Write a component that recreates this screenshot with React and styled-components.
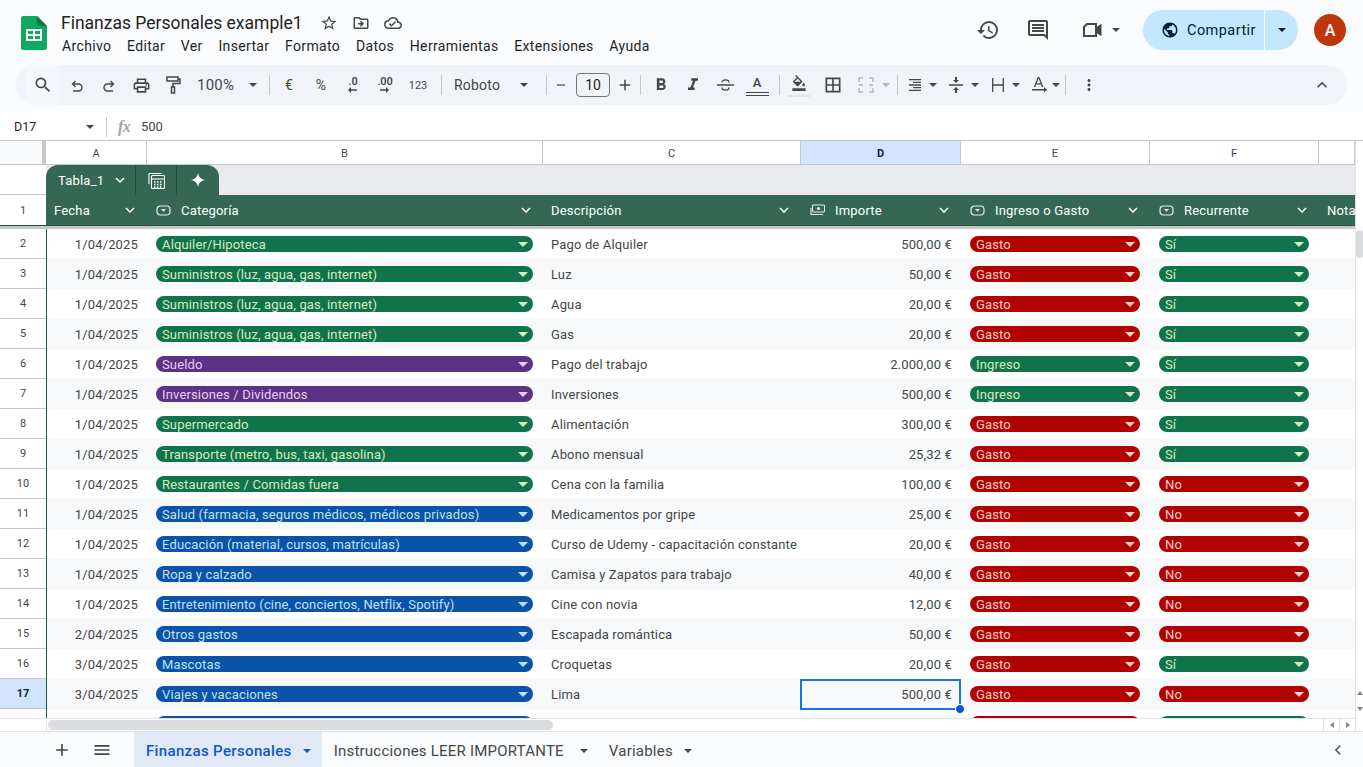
import React from "react";
import styled, { createGlobalStyle } from "styled-components";
import {
  MdSearch, MdOutlinePrint, MdFormatBold, MdFormatItalic,
  MdFormatColorFill, MdBorderAll, MdFormatAlignRight, MdMoreVert, MdExpandLess,
  MdHistory, MdOutlineComment, MdPublic, MdStarBorder, MdOutlineDriveFileMove,
  MdOutlineCloudDone, MdAdd, MdRemove, MdMenu, MdChevronLeft, MdExpandMore,
} from "react-icons/md";

const GlobalStyle = createGlobalStyle`
  html, body { margin: 0; padding: 0; background: #f9fbfd; }
  body { font-family: Roboto, "Liberation Sans", sans-serif; color: #444746; overflow: hidden; }
  * { box-sizing: border-box; }
`;

const COLS = "46px 101px 396px 258px 160px 189px 169px 36px";

const Page = styled.div`
  width: 1363px; height: 767px; display: flex; flex-direction: column; overflow: hidden; background: #f9fbfd;
`;
const TopBar = styled.header`
  height: 65px; display: flex; align-items: flex-start; justify-content: space-between; flex: none;
`;
const LeftHead = styled.div`display: flex; align-items: flex-start; padding: 16px 0 0 21px;`;
const Titles = styled.div`margin-left: 14px; margin-top: -4px;`;
const TitleLine = styled.div`display: flex; align-items: center; height: 22px;`;
const DocTitle = styled.div`font-size: 17.5px; color: #1f1f1f; width: 252px; white-space: nowrap;`;
const TitleIcon = styled.span`width: 32px; display: flex; justify-content: center; color: #444746; font-size: 18px;`;
const Menu = styled.nav`display: flex; gap: 15.7px; margin-top: 4px; margin-left: 1px; font-size: 14px; letter-spacing: 0.35px; color: #1f1f1f;`;
const RightHead = styled.div`display: flex; align-items: center; height: 60px; padding-right: 17px;`;
const HeadIcon = styled.span`display: flex; width: 24px; font-size: 24px; color: #444746; margin-left: ${p => p.$ml}px;`;
const Caret = styled.span`
  flex: none; width: 0; height: 0; display: inline-block;
  border-left: ${p => p.$s || 4}px solid transparent; border-right: ${p => p.$s || 4}px solid transparent;
  border-top: ${p => p.$s || 4}px solid ${p => p.$c || "#444746"};
  margin-left: ${p => p.$ml || 0}px;
`;
const Share = styled.div`
  margin-left: 23px; width: 155px; height: 40px; border-radius: 20px; background: #c2e7ff; display: flex; align-items: center; color: #001d35;
`;
const ShareMain = styled.div`
  width: 122px; height: 40px; padding-left: 18px; display: flex; align-items: center; gap: 8px; font-size: 14.5px; font-weight: 400; letter-spacing: 0.45px;
  border-right: 1px solid #f9fbfd; svg { font-size: 18px; }
`;
const ShareSide = styled.div`flex: 1; display: flex; justify-content: center;`;
const Avatar = styled.div`
  margin-left: 16px; width: 32px; height: 32px; border-radius: 50%; background: #bf360c; color: #fff; font-size: 16px; font-weight: 500;
  display: flex; align-items: center; justify-content: center;
`;

const Toolbar = styled.div`
  flex: none; height: 40px; margin: 0 16px; width: 1331px; border-radius: 20px; background: #f0f4f9; display: flex; align-items: center; padding-left: 10px; color: #444746;
`;
const Tool = styled.span`
  flex: none; width: ${p => p.$w || 32}px; margin-left: ${p => p.$ml || 0}px; height: ${p => p.$h || 28}px; display: flex; align-items: center; justify-content: center; font-size: ${p => p.$fs || 18}px; color: ${p => p.$c || "#444746"};
  background: ${p => p.$bg || "transparent"};
`;
const ToolLabel = styled.span`
  flex: none; width: ${p => p.$w}px; padding-left: ${p => p.$pl || 0}px; display: flex; align-items: center; justify-content: space-between; padding-right: ${p => p.$pr || 0}px; font-size: ${p => p.$fs || 14}px; height: 28px; letter-spacing: 0.2px;
`;
const Sep = styled.span`flex: none; width: 1px; height: 20px; background: #c7c7c7; margin: 0 ${p => p.$r ?? 6}px 0 ${p => p.$l ?? 6}px;`;
const SizeBox = styled.span`flex: none; width: 34px; height: 24px; border: 1px solid #747775; border-radius: 4px; font-size: 14px; display: flex; align-items: center; justify-content: center; color: #1f1f1f;`;
const DecWrap = styled.span`display: flex; flex-direction: column; align-items: center; font-size: 11px; font-weight: 600; line-height: 10px; letter-spacing: -0.2px;`;
const Collapse = styled.span`margin-left: auto; margin-right: 15px; font-size: 20px; display: flex; color: #444746;`;
const TextColor = styled.span`display: flex; flex-direction: column; align-items: center; font-size: 13px; line-height: 14px; width: 23px; border-bottom: 4px double #444746; padding-bottom: 2px; font-weight: 500; margin-top: 1px;`;
const FillWrap = styled.span`display: flex; flex-direction: column; align-items: center; border-bottom: 2px solid #e3e3e3; height: 23px; font-size: 16px; width: 22px; padding-top: 1px;`;

const FormulaBar = styled.div`
  flex: none; margin-top: 7px; height: 29px; background: #fff; display: flex; align-items: center; font-size: 13px; border-bottom: 1px solid #c7c7c7; color: #1f1f1f; padding-top: 1px;
`;
const CellName = styled.div`width: 106px; padding: 0 12px 0 14px; display: flex; justify-content: space-between; align-items: center; font-size: 12.5px;`;
const VLine = styled.span`width: 1px; height: 20px; background: #c7c7c7;`;
const Fx = styled.span`margin-left: 11px; width: 23px; font-family: "Liberation Serif", serif; font-style: italic; font-weight: 700; font-size: 16px; color: #a0a4a8; letter-spacing: -0.5px;`;
const FxValue = styled.span`color: #444746;`;

const Body = styled.div`flex: none; height: 590px; display: flex; background: #fff;`;
const Sheet = styled.div`width: 1355px; display: flex; flex-direction: column; overflow: hidden;`;
const GridLine = styled.div`display: grid; grid-template-columns: ${COLS};`;
const ColHead = styled(GridLine)`height: 24px; border-bottom: 1px solid #c7c7c7; flex: none;`;
const Corner = styled.div`background: #f8f9fa; border-right: 4px solid #c7c7c7;`;
const ColLetter = styled.div`
  display: flex; align-items: center; justify-content: center; padding-top: 1px; font-size: 11px; color: ${p => p.$on ? "#041e49" : "#444746"}; font-weight: ${p => p.$on ? 700 : 400};
  background: ${p => p.$on ? "#d3e3fd" : "#fff"}; border-right: 1px solid #c7c7c7;
`;
const TabRow = styled.div`height: 30px; display: flex; flex: none;`;
const RowStub = styled.div`width: 46px; background: #fff; border-bottom: 1px solid #c7c7c7;`;
const TabArea = styled.div`flex: 1; background: #e8eaed; display: flex; align-items: flex-end;`;
const TableTab = styled.div`height: 30px; width: 173px; background: #356854; border-radius: 12px 12px 0 0; display: flex; color: #fff;`;
const TabPart = styled.div`
  width: ${p => p.$w}px; padding-left: ${p => p.$pl || 0}px; display: flex; align-items: center; justify-content: ${p => p.$pl ? "flex-start" : "center"}; gap: 7px; font-size: 13px; font-weight: 400; letter-spacing: 0.2px; border-right: ${p => p.$last ? "none" : "1px solid #244c3c"};
  svg { flex: none; }
`;
const HeaderRow = styled(GridLine)`height: 31px; flex: none; border-bottom: 1px solid #244c3c; background: #356854;`;
const HeaderNum = styled.div`background: #fff; color: #444746; font-size: 11px; display: flex; align-items: center; justify-content: center;`;
const HeadCell = styled.div`
  color: #fff; font-size: 13px; font-weight: 400; display: flex; align-items: center; padding: 0 8px 0 ${p => p.$pl ?? 8}px; overflow: hidden; white-space: nowrap; letter-spacing: 0.2px;
`;
const HeadName = styled.span`flex: 1; margin-left: ${p => p.$ml || 0}px;`;
const Freeze = styled.div`height: 3px; background: #c7c7c7; flex: none;`;
const Rows = styled.div`flex: none; height: 489px; overflow: hidden;`;
const Row = styled(GridLine)`height: 30px; background: ${p => p.$alt ? "#f6f8f9" : "#fff"};`;
const RowNum = styled.div`
  display: flex; align-items: center; justify-content: center; font-size: 11px; height: 30px; background: ${p => p.$on ? "#d3e3fd" : "#fff"}; color: ${p => p.$on ? "#041e49" : "#444746"}; font-weight: ${p => p.$on ? 700 : 400};
  border-bottom: 1px solid #c7c7c7; box-shadow: 1px 0 0 #1d5c43; width: 46px;
`;
const Cell = styled.div`
  font-size: 13px; color: #444746; display: flex; align-items: center; padding: 0 9px 0 8px; position: relative; white-space: nowrap; overflow: visible; letter-spacing: 0.15px;
  justify-content: ${p => p.$right ? "flex-end" : "flex-start"};
`;
const ChipCell = styled.div`display: flex; align-items: center; padding: 0 ${p => p.$pr}px 0 9px;`;
const Chip = styled.div`
  width: 100%; height: 16px; border-radius: 8px; background: ${p => p.$bg}; color: ${p => p.$fg}; font-size: 13px; display: flex; align-items: center; justify-content: space-between; padding: 0 5px 0 6px; letter-spacing: 0.15px; white-space: nowrap; overflow: hidden;
`;
const Selection = styled.div`position: absolute; inset: 0 0 -1px -1px; border: 2px solid #1a73e8; pointer-events: none;`;
const Handle = styled.div`position: absolute; right: -6px; bottom: -6px; width: 10px; height: 10px; border-radius: 50%; background: #0b57d0; border: 1px solid #fff; z-index: 2;`;

const HScroll = styled.div`height: 13px; flex: none; display: flex; align-items: center; border-top: 1px solid #e1e3e1; background: #fff;`;
const HStub = styled.div`width: 47px; height: 12px; border-right: 1px solid #e1e3e1; margin-right: 1px; flex: none;`;
const Thumb = styled.div`width: 505px; height: 10px; border-radius: 5px; background: #dadce0;`;
const ArrowPair = styled.div`margin-left: auto; display: flex; margin-right: 0; height: 12px;`;
const ArrowBtn = styled.span`width: 16px; display: flex; align-items: center; justify-content: center; border-left: 1px solid #e1e3e1;`;
const TriH = styled.span`width: 0; height: 0; border-top: 3px solid transparent; border-bottom: 3px solid transparent; ${p => p.$left ? "border-right: 4px solid #80868b;" : "border-left: 4px solid #80868b;"}`;
const VScroll = styled.div`width: 8px; display: flex; flex-direction: column; border-left: 1px solid #e1e3e1; background: #fff; padding-top: 89px;`;
const VThumb = styled.div`width: 7px; height: 28px; border-radius: 4px; background: #dadce0;`;
const VArrows = styled.div`margin-top: auto; margin-bottom: 20px; display: flex; flex-direction: column; gap: 12px; align-items: center;`;
const TriV = styled.span`width: 0; height: 0; border-left: 3px solid transparent; border-right: 3px solid transparent; ${p => p.$up ? "border-bottom: 4px solid #80868b;" : "border-top: 4px solid #80868b;"}`;

const SheetBar = styled.footer`flex: none; height: 36px; border-top: 1px solid #e1e3e1; background: #f9fbfd; display: flex; align-items: center; padding-left: 50px;`;
const BarIcon = styled.span`display: flex; width: 24px; font-size: 20px; color: #444746; margin-right: ${p => p.$mr}px; justify-content: center;`;
const SheetTab = styled.div`
  height: 35px; padding: 3px ${p => p.$pr}px 0 12px; display: flex; align-items: center; gap: ${p => p.$gap}px; font-size: 15px; font-weight: ${p => p.$active ? 500 : 400}; letter-spacing: ${p => p.$active ? 0.35 : 0.22}px; white-space: nowrap;
  background: ${p => p.$active ? "#e1e9f7" : "transparent"}; color: ${p => p.$active ? "#0b57d0" : "#444746"};
`;
const EndIcon = styled.span`margin-left: auto; margin-right: 15px; display: flex; font-size: 20px; color: #5f6368;`;

const G = ["#11734b", "#d4edbc"], R = ["#b10202", "#ffcfc9"], B = ["#0a53a8", "#bfe1f6"], P = ["#5a3286", "#e6cff2"];
const data = [
  ["1/04/2025", "Alquiler/Hipoteca", G, "Pago de Alquiler", "500,00 €", "Gasto", "Sí"],
  ["1/04/2025", "Suministros (luz, agua, gas, internet)", G, "Luz", "50,00 €", "Gasto", "Sí"],
  ["1/04/2025", "Suministros (luz, agua, gas, internet)", G, "Agua", "20,00 €", "Gasto", "Sí"],
  ["1/04/2025", "Suministros (luz, agua, gas, internet)", G, "Gas", "20,00 €", "Gasto", "Sí"],
  ["1/04/2025", "Sueldo", P, "Pago del trabajo", "2.000,00 €", "Ingreso", "Sí"],
  ["1/04/2025", "Inversiones / Dividendos", P, "Inversiones", "500,00 €", "Ingreso", "Sí"],
  ["1/04/2025", "Supermercado", G, "Alimentación", "300,00 €", "Gasto", "Sí"],
  ["1/04/2025", "Transporte (metro, bus, taxi, gasolina)", G, "Abono mensual", "25,32 €", "Gasto", "Sí"],
  ["1/04/2025", "Restaurantes / Comidas fuera", G, "Cena con la familia", "100,00 €", "Gasto", "No"],
  ["1/04/2025", "Salud (farmacia, seguros médicos, médicos privados)", B, "Medicamentos por gripe", "25,00 €", "Gasto", "No"],
  ["1/04/2025", "Educación (material, cursos, matrículas)", B, "Curso de Udemy - capacitación constante", "20,00 €", "Gasto", "No"],
  ["1/04/2025", "Ropa y calzado", B, "Camisa y Zapatos para trabajo", "40,00 €", "Gasto", "No"],
  ["1/04/2025", "Entretenimiento (cine, conciertos, Netflix, Spotify)", B, "Cine con novia", "12,00 €", "Gasto", "No"],
  ["2/04/2025", "Otros gastos", B, "Escapada romántica", "50,00 €", "Gasto", "No"],
  ["3/04/2025", "Mascotas", B, "Croquetas", "20,00 €", "Gasto", "Sí"],
  ["3/04/2025", "Viajes y vacaciones", B, "Lima", "500,00 €", "Gasto", "No"],
];

const ChipValue = ({ c, children }) => (
  <Chip $bg={c[0]} $fg={c[1]}>
    <span>{children}</span>
    <Caret $s={5} $c={c[1]} />
  </Chip>
);

const SheetsLogo = () => (
  <svg width="26" height="34" viewBox="0 0 26 34">
    <path d="M2.500 0H16l10 10v21.500a2.500 2.500 0 0 1-2.500 2.500h-21A2.500 2.500 0 0 1 0 31.500v-29A2.500 2.500 0 0 1 2.500 0z" fill="#0ea960" />
    <path d="M16 0l10 10h-7.500A2.500 2.500 0 0 1 16 7.500z" fill="#0b7a41" />
    <path d="M5 13h16v12H5zM7 15v3h5v-3zm7 0v3h5v-3zM7 20v3h5v-3zm7 0v3h5v-3z" fill="#fff" fillRule="evenodd" />
  </svg>
);
const DropIcon = () => (
  <svg width="15" height="11" viewBox="0 0 15 11" fill="none" stroke="#e8eaed" strokeWidth="1.200">
    <rect x="1" y="1" width="13" height="9" rx="3.500" />
    <path d="M5 4h5L7.500 6.800z" fill="#e8eaed" stroke="none" />
  </svg>
);
const MoneyIcon = () => (
  <svg width="15" height="12" viewBox="0 0 15 12" fill="none" stroke="#e8eaed" strokeWidth="1.100">
    <rect x="2.500" y="1" width="12" height="7" rx="1" />
    <circle cx="8.500" cy="4.500" r="1.600" fill="#e8eaed" stroke="none" />
    <path d="M1 4v6.500h12" />
  </svg>
);
const CalcIcon = () => (
  <svg width="17" height="17" viewBox="0 0 17 17" fill="none" stroke="#fff" strokeWidth="1.100">
    <path d="M1 12V1.500h12.500" />
    <rect x="3.500" y="3.500" width="13" height="13" rx="1" />
    <path d="M3.500 7h13" />
    <path d="M6 10h1.500M9 10h1.500M12 10h1.500M6 12.500h1.500M9 12.500h1.500M12 12.500h1.500M6 15h1.500M9 15h1.500M12 15h1.500" strokeWidth="1.400" />
  </svg>
);
const SparkIcon = () => (
  <svg width="14" height="14" viewBox="0 0 14 14"><path d="M7 0c.6 4 2.900 6.400 7 7-4.100.6-6.400 3-7 7-.6-4-2.900-6.400-7-7 4.100-.6 6.400-3 7-7z" fill="#fff" /></svg>
);
const ArrowMini = ({ left }) => (
  <svg width="9" height="6" viewBox="0 0 9 6"><path d={left ? "M9 2.300H3V0L0 3l3 3V3.700h6z" : "M0 2.300h6V0l3 3-3 3V3.700H0z"} fill="#444746" /></svg>
);
const Undo = () => (
  <svg width="14" height="14" viewBox="0 0 14 14" fill="none" stroke="#444746" strokeWidth="1.400" style={{ marginTop: 3 }}>
    <path d="M5.500 1L2.500 4l3 3M2.500 4h6a3.500 3.500 0 0 1 0 7H3" />
  </svg>
);
const Redo = () => (
  <svg width="14" height="14" viewBox="0 0 14 14" fill="none" stroke="#444746" strokeWidth="1.400" style={{ marginTop: 3 }}>
    <path d="M8.500 1l3 3-3 3M11.500 4h-6a3.500 3.500 0 0 0 0 7H11" />
  </svg>
);
const Roller = () => (
  <svg width="15" height="18" viewBox="0 0 15 18" fill="none" stroke="#444746" strokeWidth="1.500">
    <rect x="1" y="1" width="11" height="4" />
    <path d="M12 3h2v4.500H7V11" />
    <rect x="5.500" y="11" width="3" height="6" />
  </svg>
);
const Strike = () => (
  <svg width="17" height="14" viewBox="0 0 17 14" fill="none" stroke="#444746" strokeWidth="1.300">
    <path d="M0 7h17M5 4.500C5 1 12 1 12 4.500M5 9.500c0 3.500 7 3.500 7 0" />
  </svg>
);
const Merge = () => (
  <svg width="16" height="18" viewBox="0 0 16 18" fill="none" stroke="#b4b8bc" strokeWidth="1.500">
    <path d="M5 2H1v4M11 2h4v4M5 16H1v-4M11 16h4v-4M1 9h4M15 9h-4" />
  </svg>
);
const VAlign = () => (
  <svg width="14" height="18" viewBox="0 0 14 18" fill="#444746"><path d="M0 8.300h14v1.400H0zM7 7L4 4h2V1h2v3h2zM7 11l3 3H8v3H6v-3H4z" /></svg>
);
const Wrap = () => (
  <svg width="12" height="14" viewBox="0 0 12 14" fill="none" stroke="#444746" strokeWidth="1.300"><path d="M.7 0v14M11.300 0v14M.7 7h10.600" /></svg>
);
const Rotate = () => (
  <svg width="15" height="18" viewBox="0 0 15 18" fill="#444746">
    <path d="M5.800 1h1.600l4 10H9.900l-.9-2.400H4.200L3.300 11H1.800zM4.700 7.300h3.800L6.600 2.600z" />
    <path d="M0 13h12v-2l3 2.800-3 2.800v-2H0z" />
  </svg>
);
const VideoIcon = () => (
  <svg width="24" height="24" viewBox="0 0 24 24" fill="none" stroke="#444746" strokeWidth="2"><path d="M7 6h9v12H4V9z" /><path d="M16 10.500l4.500-3v9l-4.500-3" fill="#444746" /></svg>
);

export default function App() {
  return (
    <Page>
      <GlobalStyle />
      <TopBar>
        <LeftHead>
          <SheetsLogo />
          <Titles>
            <TitleLine>
              <DocTitle>Finanzas Personales example1</DocTitle>
              <TitleIcon><MdStarBorder /></TitleIcon>
              <TitleIcon><MdOutlineDriveFileMove /></TitleIcon>
              <TitleIcon><MdOutlineCloudDone /></TitleIcon>
            </TitleLine>
            <Menu>
              {["Archivo", "Editar", "Ver", "Insertar", "Formato", "Datos", "Herramientas", "Extensiones", "Ayuda"].map(m => <span key={m}>{m}</span>)}
            </Menu>
          </Titles>
        </LeftHead>
        <RightHead>
          <HeadIcon $ml={0}><MdHistory /></HeadIcon>
          <HeadIcon $ml={26}><MdOutlineComment /></HeadIcon>
          <HeadIcon $ml={30}><VideoIcon /></HeadIcon>
          <Caret $ml={8} />
          <Share>
            <ShareMain><MdPublic />Compartir</ShareMain>
            <ShareSide><Caret $c="#001d35" /></ShareSide>
          </Share>
          <Avatar>A</Avatar>
        </RightHead>
      </TopBar>

      <Toolbar>
        <Tool $w={34} $h={40} $fs={20} $bg="#f4f7fb"><MdSearch /></Tool>
        <Tool $ml={1}><Undo /></Tool>
        <Tool><Redo /></Tool>
        <Tool $fs={19}><MdOutlinePrint /></Tool>
        <Tool><Roller /></Tool>
        <ToolLabel $w={74} $pl={8} $pr={6} $fs={15}>100%<Caret /></ToolLabel>
        <Sep $l={6} $r={3} />
        <Tool $fs={14}>€</Tool>
        <Tool $fs={14}>%</Tool>
        <Tool><DecWrap>.0<ArrowMini left /></DecWrap></Tool>
        <Tool><DecWrap>.00<ArrowMini /></DecWrap></Tool>
        <Tool $w={34} $fs={11}>123</Tool>
        <Sep />
        <ToolLabel $w={90} $pl={6} $pr={10} $fs={14}>Roboto<Caret /></ToolLabel>
        <Sep $l={8} $r={7} />
        <Tool $w={14} $fs={16}><MdRemove /></Tool>
        <Tool $w={8} />
        <SizeBox>10</SizeBox>
        <Tool $w={30} $fs={18}><MdAdd /></Tool>
        <Sep $l={0} $r={4} />
        <Tool $fs={20}><MdFormatBold /></Tool>
        <Tool $ml={0} $fs={20}><MdFormatItalic /></Tool>
        <Tool $ml={0}><Strike /></Tool>
        <Tool><TextColor>A</TextColor></Tool>
        <Sep />
        <Tool $ml={-3}><FillWrap><MdFormatColorFill /></FillWrap></Tool>
        <Tool $ml={2} $fs={20}><MdBorderAll /></Tool>
        <Tool $ml={1}><Merge /></Tool>
        <Caret $c="#b4b8bc" />
        <Sep $l={7} $r={9} />
        <Tool $w={16} $fs={18}><MdFormatAlignRight /></Tool>
        <Caret $ml={6} />
        <Tool $w={24} $ml={7}><VAlign /></Tool>
        <Caret $ml={3} />
        <Tool $w={20} $ml={9}><Wrap /></Tool>
        <Caret $ml={4} />
        <Tool $w={20} $ml={9}><Rotate /></Tool>
        <Caret $ml={3} />
        <Sep $l={5} $r={7} />
        <Tool $fs={18}><MdMoreVert /></Tool>
        <Collapse><MdExpandLess /></Collapse>
      </Toolbar>

      <FormulaBar>
        <CellName>D17<Caret /></CellName>
        <VLine />
        <Fx>fx</Fx>
        <FxValue>500</FxValue>
      </FormulaBar>

      <Body>
        <Sheet>
          <ColHead>
            <Corner />
            {["A", "B", "C", "D", "E", "F", ""].map(l => <ColLetter key={l} $on={l === "D"}>{l}</ColLetter>)}
          </ColHead>
          <TabRow>
            <RowStub />
            <TabArea>
              <TableTab>
                <TabPart $w={90} $pl={12}>Tabla_1<MdExpandMore size={18} /></TabPart>
                <TabPart $w={41}><CalcIcon /></TabPart>
                <TabPart $w={42} $last><SparkIcon /></TabPart>
              </TableTab>
            </TabArea>
          </TabRow>
          <HeaderRow>
            <HeaderNum>1</HeaderNum>
            <HeadCell><HeadName>Fecha</HeadName><MdExpandMore size={18} /></HeadCell>
            <HeadCell $pl={9}><DropIcon /><HeadName $ml={10}>Categoría</HeadName><MdExpandMore size={18} /></HeadCell>
            <HeadCell><HeadName>Descripción</HeadName><MdExpandMore size={18} /></HeadCell>
            <HeadCell $pl={9}><MoneyIcon /><HeadName $ml={10}>Importe</HeadName><MdExpandMore size={18} /></HeadCell>
            <HeadCell $pl={9}><DropIcon /><HeadName $ml={10}>Ingreso o Gasto</HeadName><MdExpandMore size={18} /></HeadCell>
            <HeadCell $pl={9}><DropIcon /><HeadName $ml={10}>Recurrente</HeadName><MdExpandMore size={18} /></HeadCell>
            <HeadCell>Nota</HeadCell>
          </HeaderRow>
          <Freeze />
          <Rows>
            {data.map((d, i) => {
              const n = i + 2;
              const sel = n === 17;
              return (
                <Row key={n} $alt={n % 2 === 1}>
                  <RowNum $on={sel}>{n}</RowNum>
                  <Cell $right>{d[0]}</Cell>
                  <ChipCell $pr={10}><ChipValue c={d[2]}>{d[1]}</ChipValue></ChipCell>
                  <Cell>{d[3]}</Cell>
                  <Cell $right>
                    {d[4]}
                    {sel && <Selection><Handle /></Selection>}
                  </Cell>
                  <ChipCell $pr={10}><ChipValue c={d[5] === "Ingreso" ? G : R}>{d[5]}</ChipValue></ChipCell>
                  <ChipCell $pr={10}><ChipValue c={d[6] === "Sí" ? G : R}>{d[6]}</ChipValue></ChipCell>
                  <Cell />
                </Row>
              );
            })}
            <Row>
              <RowNum />
              <Cell />
              <ChipCell $pr={10}><ChipValue c={B} /></ChipCell>
              <Cell />
              <Cell />
              <ChipCell $pr={10}><ChipValue c={R} /></ChipCell>
              <ChipCell $pr={10}><ChipValue c={G} /></ChipCell>
              <Cell />
            </Row>
          </Rows>
          <HScroll>
            <HStub />
            <Thumb />
            <ArrowPair>
              <ArrowBtn><TriH $left /></ArrowBtn>
              <ArrowBtn><TriH /></ArrowBtn>
            </ArrowPair>
          </HScroll>
        </Sheet>
        <VScroll>
          <VThumb />
          <VArrows><TriV $up /><TriV /></VArrows>
        </VScroll>
      </Body>

      <SheetBar>
        <BarIcon $mr={16}><MdAdd /></BarIcon>
        <BarIcon $mr={20}><MdMenu /></BarIcon>
        <SheetTab $active $gap={11} $pr={11}>Finanzas Personales<Caret $c="#0b57d0" /></SheetTab>
        <SheetTab $gap={16} $pr={9}>Instrucciones LEER IMPORTANTE<Caret /></SheetTab>
        <SheetTab $gap={11} $pr={11}>Variables<Caret /></SheetTab>
        <EndIcon><MdChevronLeft /></EndIcon>
      </SheetBar>
    </Page>
  );
}
